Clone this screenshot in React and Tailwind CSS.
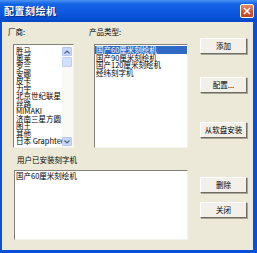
import React from "react";

const font = { fontFamily: '"Noto Sans CJK SC", "Noto Sans", sans-serif' };

function Btn({ children, className = "" }) {
  return (
    <div
      className={`w-[47px] h-[16px] flex items-center justify-center bg-[#F2F0E8] border border-t-[#FFFFFF] border-l-[#FFFFFF] border-r-[#6F6D63] border-b-[#6F6D63] shadow-[1px_1px_0_#A8A599] text-[7.5px] leading-[8px] text-black ${className}`}
    >
      {children}
    </div>
  );
}

function ScrollArrow({ up }) {
  return (
    <div className="w-[10px] h-[9px] bg-[#C8D8FB] border border-[#B4C7F2] rounded-[1px] flex items-center justify-center">
      <svg width="6" height="4" viewBox="0 0 6 4">
        <path
          d={up ? "M0.5 3.5 L3 1 L5.5 3.5" : "M0.5 0.5 L3 3 L5.5 0.5"}
          fill="none"
          stroke="#4D6185"
          strokeWidth="1.2"
        />
      </svg>
    </div>
  );
}

export default function App() {
  const vendors = [
    "胜马",
    "奥莱",
    "罗兰",
    "安娜",
    "皮卡",
    "力宇",
    "北京世纪联星",
    "丝路",
    "MIMAKI",
    "济南三星方圆",
    "图王",
    "其他",
    "日本 Graphtec",
  ];
  const products = ["国产60厘米刻绘机", "国产90厘米刻绘机", "国产120厘米刻绘机", "经纬刻字机"];

  return (
    <div className="w-[257px] h-[253px] flex flex-col bg-[#0A4FD8] overflow-hidden" style={font}>
      {/* Title bar */}
      <div className="h-[22px] shrink-0 flex items-center justify-between pl-[4px] pr-[3px] bg-[linear-gradient(to_bottom,#4A93F5,#1464E6_18%,#0B57DE_60%,#0548C9)]">
        <span className="text-white font-bold text-[10px] leading-[10px] tracking-[0.5px] [text-shadow:1px_1px_0_#0A2A7A]">
          配置刻绘机
        </span>
        <div className="w-[14px] h-[14px] rounded-[2px] border border-white bg-[linear-gradient(to_bottom,#E98A6A,#D45A35_50%,#C2421E)] flex items-center justify-center">
          <svg width="8" height="8" viewBox="0 0 8 8">
            <path d="M1 1 L7 7 M7 1 L1 7" stroke="white" strokeWidth="1.6" />
          </svg>
        </div>
      </div>

      {/* Body */}
      <div className="flex-1 flex ml-[2px] mr-[4px] mb-[3px] bg-[#ECE9D8] text-black">
        {/* Left column */}
        <div className="flex flex-col pl-[11px] w-[186px]">
          <div className="mt-[6px] h-[8px] flex text-[7.5px] leading-[8px] -ml-[5px]">
            <span className="w-[81px]">厂商:</span>
            <span>产品类型:</span>
          </div>
          <div className="mt-[8px] flex gap-[20px]">
            {/* Vendor list */}
            <div className="w-[61px] h-[104px] bg-white border border-t-[#828177] border-l-[#828177] border-r-[#F4F3EE] border-b-[#F4F3EE] flex overflow-hidden">
              <div className="flex-1 pl-[2px] pt-[2px] text-[7.5px] leading-[7.5px] overflow-hidden whitespace-nowrap">
                {vendors.map((v) => (
                  <div key={v} className="h-[7.5px]">
                    {v}
                  </div>
                ))}
              </div>
              <div className="w-[11px] flex flex-col bg-[#FAF9F5] pt-[2px] pb-[1px]">
                <ScrollArrow up />
                <div className="h-[10px] mt-[1px] w-[10px] bg-[#D3E0FB] border border-[#C0D0F3] rounded-[1px]" />
                <div className="flex-1" />
                <ScrollArrow />
              </div>
            </div>
            {/* Product list */}
            <div className="w-[94px] h-[104px] bg-white border border-t-[#828177] border-l-[#828177] border-r-[#F4F3EE] border-b-[#F4F3EE] pt-[1px] text-[7.5px] leading-[7.5px] whitespace-nowrap overflow-hidden">
              {products.map((p, i) => (
                <div
                  key={p}
                  className={`h-[7.5px] pl-[1px] ${i === 0 ? "bg-[#316AC5] text-white" : ""}`}
                >
                  {p}
                </div>
              ))}
            </div>
          </div>
          <div className="mt-[8px] ml-[4px] h-[8px] text-[7.5px] leading-[8px]">用户已安装刻字机</div>
          <div className="mt-[6px] ml-[1px] w-[174px] h-[70px] bg-white border border-t-[#828177] border-l-[#828177] border-r-[#F4F3EE] border-b-[#F4F3EE] pl-[1px] pt-[1px] text-[7.5px] leading-[7.5px]">
            国产60厘米刻绘机
          </div>
        </div>

        {/* Button column */}
        <div className="flex flex-col ml-[12px]">
          <Btn className="mt-[16px]">添加</Btn>
          <Btn className="mt-[23px]">配置...</Btn>
          <Btn className="mt-[29px]">从软盘安装</Btn>
          <Btn className="mt-[39px]">删除</Btn>
          <Btn className="mt-[9px]">关闭</Btn>
        </div>
      </div>
    </div>
  );
}
